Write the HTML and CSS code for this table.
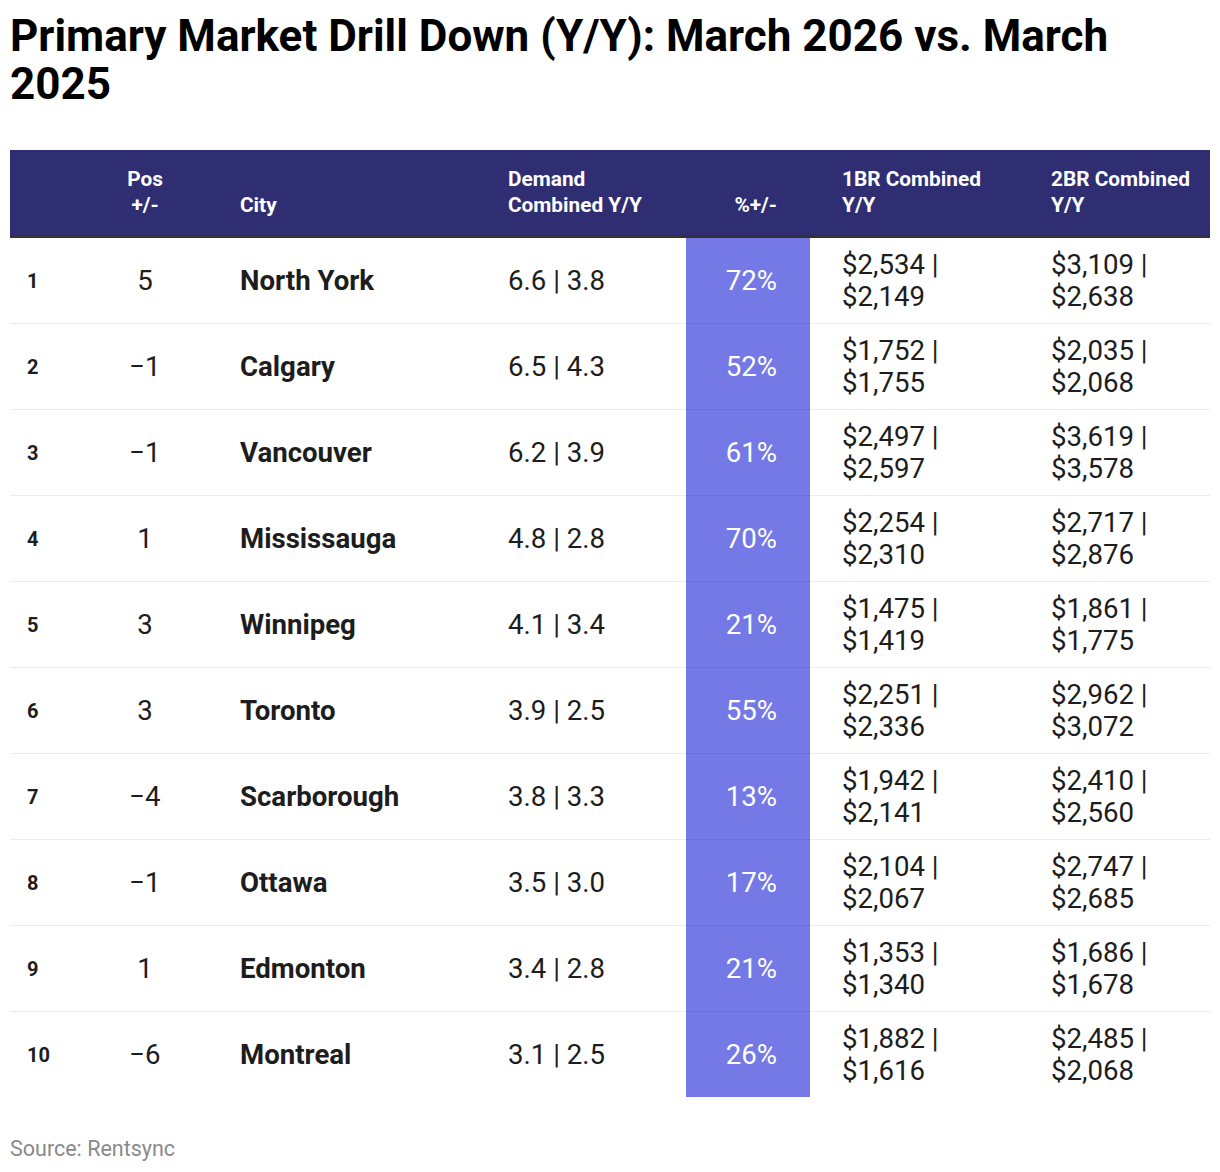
FILE: index.html
```html
<!DOCTYPE html>
<html lang="en">
<head>
<meta charset="utf-8">
<title>Primary Market Drill Down</title>
<link rel="stylesheet" href="styles.css">
</head>
<body>
<div class="chart">
  <h1 class="title">Primary Market Drill Down (Y/Y): March 2026 vs. March 2025</h1>
  <table class="data">
    <colgroup>
      <col class="c-rank"><col class="c-pos"><col class="c-city"><col class="c-demand"><col class="c-pct"><col class="c-1br"><col class="c-2br">
    </colgroup>
    <thead>
      <tr>
        <th class="rank"></th>
        <th class="pos">Pos +/-</th>
        <th class="city">City</th>
        <th class="demand">Demand Combined Y/Y</th>
        <th class="pct">%+/-</th>
        <th class="br1">1BR Combined Y/Y</th>
        <th class="br2">2BR Combined Y/Y</th>
      </tr>
    </thead>
    <tbody>
      <tr><td class="rank">1</td><td class="pos">5</td><td class="city">North York</td><td class="demand">6.6 | 3.8</td><td class="pct">72%</td><td class="br1">$2,534 | $2,149</td><td class="br2">$3,109 | $2,638</td></tr>
      <tr><td class="rank">2</td><td class="pos">−1</td><td class="city">Calgary</td><td class="demand">6.5 | 4.3</td><td class="pct">52%</td><td class="br1">$1,752 | $1,755</td><td class="br2">$2,035 | $2,068</td></tr>
      <tr><td class="rank">3</td><td class="pos">−1</td><td class="city">Vancouver</td><td class="demand">6.2 | 3.9</td><td class="pct">61%</td><td class="br1">$2,497 | $2,597</td><td class="br2">$3,619 | $3,578</td></tr>
      <tr><td class="rank">4</td><td class="pos">1</td><td class="city">Mississauga</td><td class="demand">4.8 | 2.8</td><td class="pct">70%</td><td class="br1">$2,254 | $2,310</td><td class="br2">$2,717 | $2,876</td></tr>
      <tr><td class="rank">5</td><td class="pos">3</td><td class="city">Winnipeg</td><td class="demand">4.1 | 3.4</td><td class="pct">21%</td><td class="br1">$1,475 | $1,419</td><td class="br2">$1,861 | $1,775</td></tr>
      <tr><td class="rank">6</td><td class="pos">3</td><td class="city">Toronto</td><td class="demand">3.9 | 2.5</td><td class="pct">55%</td><td class="br1">$2,251 | $2,336</td><td class="br2">$2,962 | $3,072</td></tr>
      <tr><td class="rank">7</td><td class="pos">−4</td><td class="city">Scarborough</td><td class="demand">3.8 | 3.3</td><td class="pct">13%</td><td class="br1">$1,942 | $2,141</td><td class="br2">$2,410 | $2,560</td></tr>
      <tr><td class="rank">8</td><td class="pos">−1</td><td class="city">Ottawa</td><td class="demand">3.5 | 3.0</td><td class="pct">17%</td><td class="br1">$2,104 | $2,067</td><td class="br2">$2,747 | $2,685</td></tr>
      <tr><td class="rank">9</td><td class="pos">1</td><td class="city">Edmonton</td><td class="demand">3.4 | 2.8</td><td class="pct">21%</td><td class="br1">$1,353 | $1,340</td><td class="br2">$1,686 | $1,678</td></tr>
      <tr><td class="rank">10</td><td class="pos">−6</td><td class="city">Montreal</td><td class="demand">3.1 | 2.5</td><td class="pct">26%</td><td class="br1">$1,882 | $1,616</td><td class="br2">$2,485 | $2,068</td></tr>
    </tbody>
  </table>
  <p class="source">Source: Rentsync</p>
</div>
</body>
</html>
```

FILE: styles.css
```css
html, body {
  margin: 0;
  padding: 0;
  background: #ffffff;
}

body {
  font-family: Roboto, "Liberation Sans", sans-serif;
  color: #1d1d1d;
}

.chart {
  padding: 12px 10px 0 10px;
}

.title {
  margin: 0;
  max-width: 1150px;
  font-size: 44px;
  line-height: 48px;
  font-weight: 700;
  color: #000000;
}

.data {
  margin-top: 42px;
  width: 1200px;
  border-collapse: collapse;
  table-layout: fixed;
}

.c-rank { width: 50px; }
.c-pos { width: 170px; }
.c-city { width: 268px; }
.c-demand { width: 188px; }
.c-pct { width: 124px; }
.c-1br { width: 231px; }
.c-2br { width: 169px; }

.data thead th {
  background: #2f2e72;
  color: #ffffff;
  font-size: 20.8px;
  font-weight: 700;
  line-height: 26px;
  text-align: left;
  vertical-align: bottom;
  padding: 16px 10px 17px 10px;
  border-bottom: 3px solid #333333;
}

.data td {
  height: 85px;
  padding: 0 10px;
  font-size: 27.6px;
  line-height: 32px;
  vertical-align: middle;
  border-bottom: 1px solid #ececec;
}

.data tbody tr:last-child td {
  border-bottom: none;
}

.data .rank {
  padding-left: 17px;
  padding-right: 0;
  font-size: 20px;
  font-weight: 700;
}

.data .pos {
  text-align: center;
  padding-left: 58px;
  padding-right: 58px;
}

.data .city {
  font-weight: 700;
}

.data .demand {
  padding-right: 30px;
}

.data .pct {
  text-align: right;
  padding-right: 33px;
  padding-left: 0;
}

.data td.pct {
  background: #7479e5;
  color: #ffffff;
  border-bottom-color: rgba(0, 0, 0, 0.06);
}

.data .br1 {
  padding-left: 32px;
  padding-right: 30px;
}

.data .br2 {
  padding-left: 10px;
  padding-right: 0;
}

.source {
  margin: 40px 0 0 0;
  font-size: 21.5px;
  line-height: 24px;
  color: #8a8a8a;
}
```
